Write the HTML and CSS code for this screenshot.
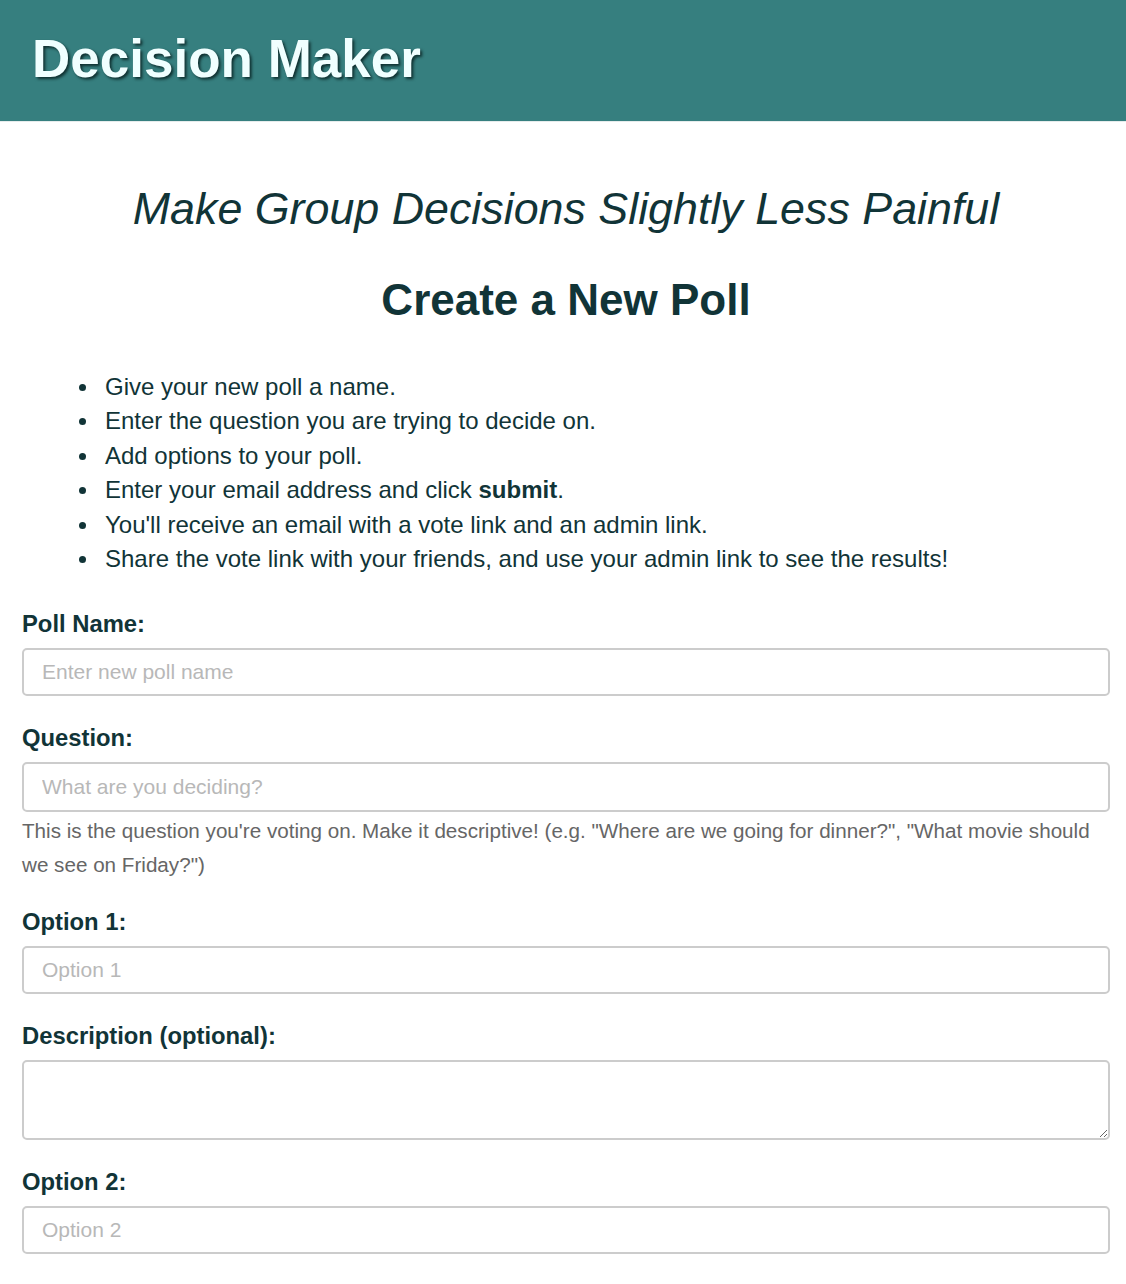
FILE: index.html
```html
<!DOCTYPE html>
<html lang="en">
<head>
<meta charset="utf-8">
<title>Decision Maker</title>
<link rel="stylesheet" href="styles.css">
</head>
<body>
<header class="topbar">
  <h1 class="brand">Decision Maker</h1>
</header>
<main class="page">
  <p class="tagline">Make Group Decisions Slightly Less Painful</p>
  <h2 class="title">Create a New Poll</h2>
  <ul class="steps">
    <li>Give your new poll a name.</li>
    <li>Enter the question you are trying to decide on.</li>
    <li>Add options to your poll.</li>
    <li>Enter your email address and click <strong>submit</strong>.</li>
    <li>You'll receive an email with a vote link and an admin link.</li>
    <li>Share the vote link with your friends, and use your admin link to see the results!</li>
  </ul>
  <form class="poll-form">
    <div class="group">
      <label class="label" for="pollName">Poll Name:</label>
      <input class="field" id="pollName" type="text" placeholder="Enter new poll name">
    </div>
    <div class="group">
      <label class="label" for="question">Question:</label>
      <input class="field field-tall" id="question" type="text" placeholder="What are you deciding?">
      <p class="help">This is the question you're voting on. Make it descriptive! (e.g. "Where are we going for dinner?", "What movie should we see on Friday?")</p>
    </div>
    <div class="group">
      <label class="label" for="opt1">Option 1:</label>
      <input class="field" id="opt1" type="text" placeholder="Option 1">
    </div>
    <div class="group">
      <label class="label" for="desc1">Description (optional):</label>
      <textarea class="field area" id="desc1"></textarea>
    </div>
    <div class="group">
      <label class="label" for="opt2">Option 2:</label>
      <input class="field" id="opt2" type="text" placeholder="Option 2">
    </div>
  </form>
</main>
</body>
</html>
```

FILE: styles.css
```css
* { box-sizing: border-box; }
html, body { margin: 0; padding: 0; background: #ffffff; }
body {
  font-family: "Liberation Sans", Arial, Helvetica, sans-serif;
  color: #113437;
}
.topbar {
  background: #367f7f;
  height: 122px;
  border-bottom: 1px solid #e6ecec;
  display: flex;
  align-items: center;
  padding-left: 32px;
}
.brand {
  margin: 0;
  font-size: 53px;
  font-weight: bold;
  color: #f0ffff;
  text-shadow: 2px 2px 3px rgba(0, 20, 20, 0.75);
  line-height: 1;
  padding-bottom: 4px;
}
.page {
  padding: 0 16px 40px 22px;
}
.tagline {
  margin: 58px 0 0;
  text-align: center;
  font-style: italic;
  font-size: 44.8px;
  line-height: 56px;
}
.title {
  margin: 36px 0 0;
  text-align: center;
  font-size: 44px;
  font-weight: bold;
  line-height: 56px;
}
.steps {
  margin: 42px 0 0;
  padding-left: 83px;
  font-size: 24px;
  line-height: 34.4px;
  list-style: none;
}
.steps li::before {
  content: "";
  display: inline-block;
  width: 7px;
  height: 7px;
  border-radius: 50%;
  background: currentColor;
  margin-left: -26px;
  margin-right: 19px;
  vertical-align: 4px;
}
.steps strong { font-weight: bold; }
.poll-form { margin-top: 33px; }
.group { margin-bottom: 27px; }
.label {
  display: block;
  font-size: 23.8px;
  font-weight: bold;
  line-height: 30px;
  margin-bottom: 9px;
}
.field {
  display: block;
  width: 100%;
  height: 48px;
  border: 2px solid #cccccc;
  border-radius: 5px;
  padding: 0 18px;
  font-family: "Liberation Sans", Arial, Helvetica, sans-serif;
  font-size: 21px;
  color: #333;
  background: #fff;
  outline: none;
}
.field-tall { height: 50px; }
.field::placeholder { color: #b8b8b8; }
.area {
  height: 80px;
  padding: 10px 18px;
  resize: vertical;
}
.help {
  margin: 2px 0 -2px;
  color: #666666;
  font-size: 20.65px;
  line-height: 34px;
}
```
